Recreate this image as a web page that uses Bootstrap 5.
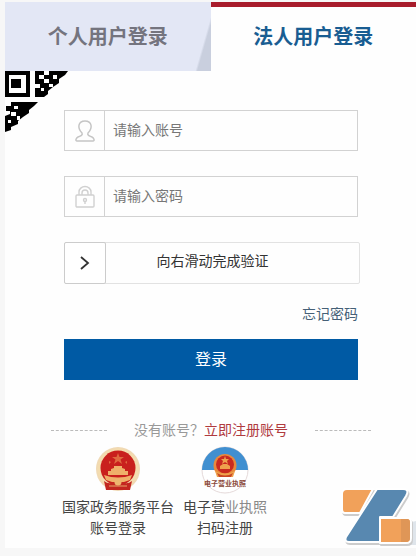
<!DOCTYPE html>
<html lang="zh-CN">
<head>
<meta charset="utf-8">
<meta name="viewport" content="width=device-width, initial-scale=1">
<title>法人用户登录</title>
<link href="https://cdn.jsdelivr.net/npm/bootstrap@5.3.0/dist/css/bootstrap.min.css" rel="stylesheet">
<style>
body{background:#f7f7f7;font-family:"Liberation Sans","Noto Sans CJK SC",sans-serif;font-size:14px;line-height:21px;color:#333}
.login-panel{margin:2px 0 8px 5px;background:#fefefe}
.login-tab{height:69px;border:0;font-size:20px;font-weight:700;line-height:30px}
.tab-person{background:linear-gradient(106deg,#e3e7f5 0 93%,#c9cfde 94%);color:#74747e}
.tab-legal{background:#fefefe;border-top:5px solid #a81c2c;color:#195d92;padding-bottom:6px}
.qr-corner{left:0;top:68px}
.login-form{padding:39px 58px 0 59px}
.field-box{height:41px;margin-bottom:25px;border:1px solid #d2d2d2}
.field-icon{width:40px;border-right:1px solid #d2d2d2}
.field-box .form-control{font-size:14px;padding:0 8px;color:#444}
.field-box .form-control::placeholder{color:#777;opacity:1}
.slide-box{height:42px;border:1px solid #e2e2e2;border-radius:2px;margin-right:-2px}
.slide-handle{width:42px;margin:-1px 0 -1px -1px;background:#fff;border:1px solid #ccc;border-radius:2px}
.slide-text{padding-right:40px;line-height:24px;padding-bottom:4px}
.forgot-link{margin:20px 0 14px;color:#456077}
.login-btn{height:41px;border-radius:0;background:#005aa4;color:#fff;font-size:16px}
.register-row{padding:40px 45px 0 46px}
.dot-line{width:56px;border-top:1px dashed #bbb}
.register-ask{color:#999}
.register-link{color:#b03a3e}
.channel-list{padding:5px 0 9px 57px;gap:9px}
.channel-link{color:#444}
.channel-link svg{margin-bottom:3px}
.faded-part{color:#888}
.brand-mark{right:0;bottom:0}
</style>
<script src="https://cdn.jsdelivr.net/npm/bootstrap@5.3.0/dist/js/bootstrap.bundle.min.js"></script>
</head>
<body>
<main class="login-panel position-relative">
  <div class="d-flex" role="tablist">
    <button type="button" role="tab" aria-selected="false" class="login-tab tab-person w-50">个人用户登录</button>
    <button type="button" role="tab" aria-selected="true" class="login-tab tab-legal w-50">法人用户登录</button>
  </div>
  <svg class="qr-corner position-absolute" width="64" height="62" viewBox="0 0 64 62" aria-hidden="true">
    <path fill-rule="evenodd" d="M0 1H25V27H0ZM4 5V23H21V5ZM6 9H16V18H6Z"/>
    <path d="M30 1H39V5H44V1H63L60 5 54 9V13L48 17 43 21V24L39 27H30V18H35V14H30Z"/>
    <path d="M6 32H33L29 36 24 40V43L18 47 13 51V54L6 57V60L0 62V46L5 44V41H1V36H6Z"/>
    <path fill="#fff" d="M34 5h5v4h-5ZM39 9h5v4h-5ZM44 14h4v3h-4ZM48 5h4v4h-4ZM36 18h3v3h-3ZM9 36h4v3H9ZM6 42h5v4H6ZM12 46h3v4h-3ZM3 50h3v3H3Z"/>
  </svg>
  <form>
    <div class="login-form">
      <div class="field-box d-flex">
        <label for="account" class="field-icon d-flex align-items-center justify-content-center flex-shrink-0" aria-label="账号">
          <svg width="22" height="24" viewBox="0 0 22 24" fill="none" stroke="#c5c5c5" stroke-width="1.5" stroke-linejoin="round"><path d="M8 14C3 9 4 2 11 2s8 7 3 12c-1 2 1 3 4 4 2 1 3 4 1 4H3c-2 0-1-3 1-4 3-1 5-2 4-4Z"/></svg>
        </label>
        <input id="account" type="text" class="form-control border-0 rounded-0 bg-transparent" placeholder="请输入账号">
      </div>
      <div class="field-box d-flex">
        <label for="password" class="field-icon d-flex align-items-center justify-content-center flex-shrink-0" aria-label="密码">
          <svg width="22" height="24" viewBox="0 0 22 24" fill="none" stroke="#d0d0d0" stroke-width="1.4"><rect x="2" y="10" width="18" height="12" rx="1"/><path d="M5 10V7a6 5.500 0 0 1 12 0v3M8 10V8a3 3 0 0 1 6 0v2M11 16v3"/><circle cx="11" cy="15" r="1.500"/></svg>
        </label>
        <input id="password" type="password" class="form-control border-0 rounded-0 bg-transparent" placeholder="请输入密码">
      </div>
      <div class="slide-box d-flex">
        <button type="button" class="slide-handle d-flex align-items-center justify-content-center p-0 flex-shrink-0" aria-label="向右滑动">
          <svg width="12" height="16" viewBox="0 0 12 16" fill="none" stroke="#333" stroke-width="1.8"><path d="M2 2l7 6-7 6"/></svg>
        </button>
        <span class="slide-text flex-grow-1 text-center align-self-center">向右滑动完成验证</span>
      </div>
      <div class="d-flex justify-content-end"><a href="#" class="forgot-link text-decoration-none">忘记密码</a></div>
      <button type="submit" class="login-btn btn w-100 p-0">登录</button>
    </div>
    <div class="register-row d-flex align-items-center justify-content-between">
      <span class="dot-line"></span>
      <span class="text-nowrap"><span class="register-ask">没有账号？</span><a href="#" class="register-link text-decoration-none">立即注册账号</a></span>
      <span class="dot-line"></span>
    </div>
    <div class="channel-list d-flex text-center">
      <a href="#" class="channel-link text-decoration-none">
        <svg width="46" height="48" viewBox="0 0 46 48" aria-hidden="true">
          <circle cx="23" cy="23" r="22" fill="#f0d9b4"/><circle cx="23" cy="23" r="20.500" fill="#f4dcae"/>
          <circle cx="23" cy="22" r="17.500" fill="#c9201d"/>
          <path d="M23 7l1.500 4H29l-3.500 2.500L27 18l-4-3-4 3 1.500-4.500L17 11h4.500ZM14 15l2 1-2 2ZM32 15l-2 1 2 2Z" fill="#e06a40"/>
          <path d="M16 23l3-1v-2h8v2l3 1v2h3v4H13v-4h3ZM9 29q14 5 28 0l-2 5q-12 5-24 0Z" fill="#efb06a"/>
          <path d="M9 35q5 4 10 1 4 4 8 0 5 3 10-1l-2 9H11Z" fill="#c32620"/><circle cx="23" cy="36" r="3.500" fill="#eeb46f"/><path d="M14 40h18" stroke="#e8a66a"/>
        </svg>
        <span class="d-block">国家政务服务平台</span>
        <span class="d-block">账号登录</span>
      </a>
      <a href="#" class="channel-link text-decoration-none">
        <svg width="48" height="48" viewBox="0 0 48 48" aria-hidden="true">
          <circle cx="24" cy="24" r="23" fill="#fff" stroke="#e5dada"/>
          <path d="M1 24a23 23 0 0 1 46 0Z" fill="#408fd0"/>
          <circle cx="24" cy="19.500" r="11.500" fill="#e8893c"/><circle cx="24" cy="18.500" r="9" fill="#c92a20"/>
          <path d="M24 10l1 3h3l-2 2 1 3-3-2-3 2 1-3-2-2h3ZM19 20l3-2h4l3 2v3H19ZM14 25q10 5 20 0l-2 6H16Z" fill="#efa24d"/><path d="M16 27q8 5 16 0l-2 4H18Z" fill="#c94625"/>
          <text x="24" y="40" text-anchor="middle" font-size="7" font-weight="700" fill="#8b4a3a">电子营业执照</text>
        </svg>
        <span class="d-block">电子营<span class="faded-part">业执照</span></span>
        <span class="d-block">扫码注册</span>
      </a>
    </div>
  </form>
</main>
<svg class="brand-mark position-fixed" width="80" height="72" viewBox="0 0 80 72" aria-hidden="true">
  <path d="M68 40l12-3v24H36l26-8Z" fill="#dfe5eb"/>
  <g fill="#ccc" stroke="#ccc" stroke-width="2" stroke-linejoin="round" transform="translate(1 2)">
    <path d="M11 5h26L24 29H9q-3 0-3-4V10q0-5 5-5Z"/>
    <path d="M41 5h26q7 0 3 7L57 33H44v25H13q-5 0-3-5Z"/>
    <path d="M44 34h27q4 0 4 4v16q0 5-5 5H44Z"/>
  </g>
  <g stroke="#fff" stroke-width="2" stroke-linejoin="round">
    <path d="M11 5h26L24 29H9q-3 0-3-4V10q0-5 5-5Z" fill="#f1a15a"/>
    <path d="M41 5h26q7 0 3 7L57 33H44v25H13q-5 0-3-5Z" fill="#5888b0"/>
    <path d="M44 34h27q4 0 4 4v16q0 5-5 5H44Z" fill="#f1a15a"/>
  </g>
  <path d="M65 35h7q2 1 2 3v16q0 4-4 4h-5Z" fill="#df9657"/>
</svg>
</body>
</html>
